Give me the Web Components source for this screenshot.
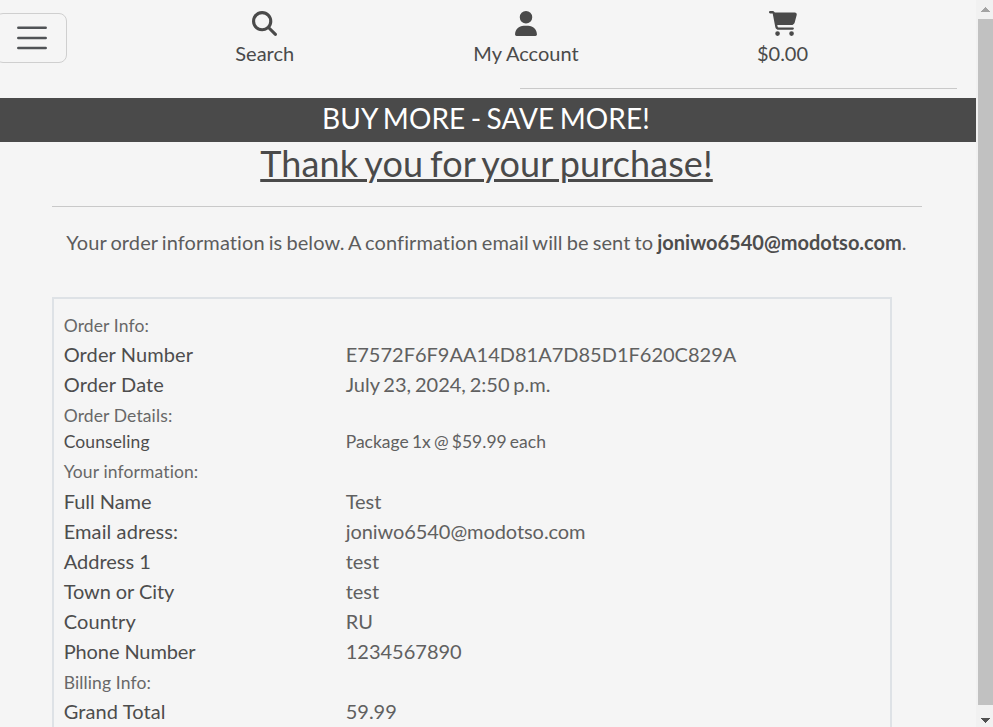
<!DOCTYPE html>
<html lang="en">
<head>
<meta charset="utf-8">
<title>Order confirmation</title>
<style>
html,body{margin:0;height:100%;overflow:hidden;background:#f5f5f5}
body{font-family:Lato,"Liberation Sans",sans-serif;font-size:20px;line-height:30px;color:#4a4a4a;font-variant-ligatures:none}
</style>
</head>
<body>
<shop-page></shop-page>
<script>
const define = (name, html) => customElements.define(name, class extends HTMLElement {
  constructor() {
    super();
    const t = document.createElement('template');
    t.innerHTML = html;
    this.attachShadow({mode: 'open'}).append(t.content.cloneNode(true));
  }
});

define('menu-toggle', `<style>
:host{display:block;box-sizing:border-box;width:72px;height:50px;margin-left:-5px;border:1px solid #cfcfcf;border-radius:8px;padding:5px 15px 0 16px}
svg{display:block;width:40px;height:38px}</style>
<svg viewBox="0 0 40 38"><path d="M6.300 8.700h27.400M6.300 18.900h27.400M6.300 29.100h27.400" fill="none" stroke="#505356" stroke-width="2.500" stroke-linecap="round"/></svg>`);

define('nav-item', `<style>
:host{display:flex;flex-direction:column;align-items:center;white-space:nowrap}
::slotted(svg){display:block;height:25px;margin-bottom:2px;fill:#4a4a4a}</style>
<slot name="icon"></slot><span><slot></slot></span>`);

define('site-header', `<style>
:host{display:grid;grid-template-columns:67px 395.500px 127px 386px;height:98px;position:relative;box-sizing:border-box;padding-top:11px}
menu-toggle{margin-top:2px}
hr{position:absolute;left:520px;top:88px;width:437px;height:1px;margin:0;border:0;background:#c9c9c9}
</style>
<menu-toggle></menu-toggle>
<nav-item><svg slot="icon" width="25" viewBox="0 0 512 512"><path d="M416 208c0 45.900-14.900 88.300-40 122.700L502.600 457.400c12.500 12.500 12.500 32.800 0 45.300s-32.800 12.500-45.300 0L330.700 376c-34.400 25.200-76.800 40-122.700 40C93.100 416 0 322.900 0 208S93.100 0 208 0S416 93.100 416 208zM208 352a144 144 0 1 0 0-288 144 144 0 1 0 0 288z"/></svg>Search</nav-item>
<nav-item><svg slot="icon" width="22" viewBox="0 0 448 512"><path d="M224 256A128 128 0 1 0 224 0a128 128 0 1 0 0 256zm-45.700 48C79.800 304 0 383.800 0 482.300C0 498.700 13.300 512 29.700 512H418.300c16.400 0 29.700-13.300 29.700-29.700C448 383.800 368.200 304 269.700 304H178.300z"/></svg>My Account</nav-item>
<nav-item><svg slot="icon" width="28" viewBox="0 0 576 512"><path d="M0 24C0 10.700 10.700 0 24 0H69.500c22 0 41.500 12.800 50.600 32h411c26.300 0 45.500 25 38.600 50.400l-41 152.300c-8.500 31.400-37 53.300-69.500 53.300H170.700l5.400 28.500c2.200 11.300 12.100 19.500 23.600 19.500H488c13.300 0 24 10.700 24 24s-10.700 24-24 24H199.700c-34.600 0-64.300-24.600-70.700-58.500L77.400 54.500c-.7-3.800-4-6.500-7.900-6.500H24C10.700 48 0 37.300 0 24zM128 464a48 48 0 1 1 96 0 48 48 0 1 1 -96 0zm336-48a48 48 0 1 1 0 96 48 48 0 1 1 0-96z"/></svg>$0.00</nav-item>
<hr>`);

define('promo-banner', `<style>
:host{display:block;height:44px;background:#4a4a4a;color:#fff;text-align:center;font-size:28px;line-height:41px;padding-right:4px;word-spacing:-1.900px;letter-spacing:.1px;box-sizing:border-box}
</style><slot></slot>`);

define('order-row', `<style>
:host{display:grid;grid-template-columns:282px 1fr;color:#4d4d4d;height:30px}
:host([small]){font-size:17.5px;line-height:26.25px;height:26px}
::slotted([slot=value]){color:#606060;word-spacing:-1.300px}
</style><span><slot></slot></span><slot name="value"></slot>`);

define('order-heading', `<style>
:host{display:block;height:30px;color:#686868}
small{font-size:17.5px;letter-spacing:.12px}
</style><small><slot></slot></small>`);

define('order-card', `<style>
:host{display:block;box-sizing:border-box;width:840px;height:600px;margin-left:52px;border:2px solid #dee2e6;padding:10px 10px 0 9.700px}
</style><slot></slot>`);

define('scroll-bar', `<style>
:host{display:flex;flex-direction:column;box-sizing:border-box;width:17px;height:727px;background:#f1f1f1;padding:7px 0 4px 2px;align-items:center}
div{width:15px;height:686px;margin:7px 0 13px;background:#c1c1c1}
svg{display:block;flex:none;shape-rendering:crispEdges;margin-right:1px}
</style>
<svg width="9" height="5"><path d="M4 0h1v1h1v1h1v1h1v1h1v1H0V4h1V3h1V2h1V1h1z" fill="#a3a3a3"/></svg>
<div></div>
<svg width="9" height="5"><path d="M0 0h9v1H8v1H7v1H6v1H5v1H4V4H3V3H2V2H1V1H0z" fill="#505050"/></svg>`);

// Each row: label, value, small flag, label tracking in px, value tracking in px.
const rows = list => list.map(([k, v, s, t = 0, u = 0]) => v === undefined
  ? `<order-heading>${k}</order-heading>`
  : `<order-row${s ? ' small' : ''}><span style="letter-spacing:${t}px">${k}</span><span slot="value" style="letter-spacing:${u}px">${v}</span></order-row>`).join('');

define('shop-page', `<style>
:host{display:grid;grid-template-columns:976px 17px;height:727px;overflow:hidden}
main{overflow:hidden;height:727px}
h1{margin:0;height:64px;box-sizing:border-box;font-size:36px;font-weight:400;line-height:43px;text-align:center;text-decoration:underline;text-decoration-thickness:3px;padding-right:3px;word-spacing:-2.300px;letter-spacing:.11px}
hr{height:1px;width:870px;margin:0 0 0 52px;border:0;background:#c9c9c9}
p{margin:20px 3px 40px 0;text-align:center;color:#5c5c5c;height:30px;word-spacing:-1.200px;letter-spacing:.1px}
b{color:#4d4d4d;letter-spacing:0}
order-row[small] + order-heading{margin-bottom:1px}
</style>
<main>
<site-header></site-header>
<promo-banner>BUY MORE - SAVE MORE!</promo-banner>
<h1>Thank you for your purchase!</h1>
<hr>
<p>Your order information is below. A confirmation email will be sent to <b>joniwo6540@modotso.com</b>.</p>
<order-card>${rows([
  ['Order Info:'],
  ['Order Number', 'E7572F6F9AA14D81A7D85D1F620C829A', false, .1],
  ['Order Date', 'July 23, 2024, 2:50 p.m.', false, .15],
  ['Order Details:'],
  ['Counseling', 'Package 1x @ $59.99 each', true, .1],
  ['Your information:'],
  ['Full Name', 'Test', false, -.05],
  ['Email adress:', 'joniwo6540@modotso.com', false, .1, -.07],
  ['Address 1', 'test'],
  ['Town or City', 'test', false, -.08],
  ['Country', 'RU', false, .1],
  ['Phone Number', '1234567890', false, -.1],
  ['Billing Info:'],
  ['Grand Total', '59.99', false, .1]
])}</order-card>
</main>
<scroll-bar></scroll-bar>`);
</script>
</body>
</html>
